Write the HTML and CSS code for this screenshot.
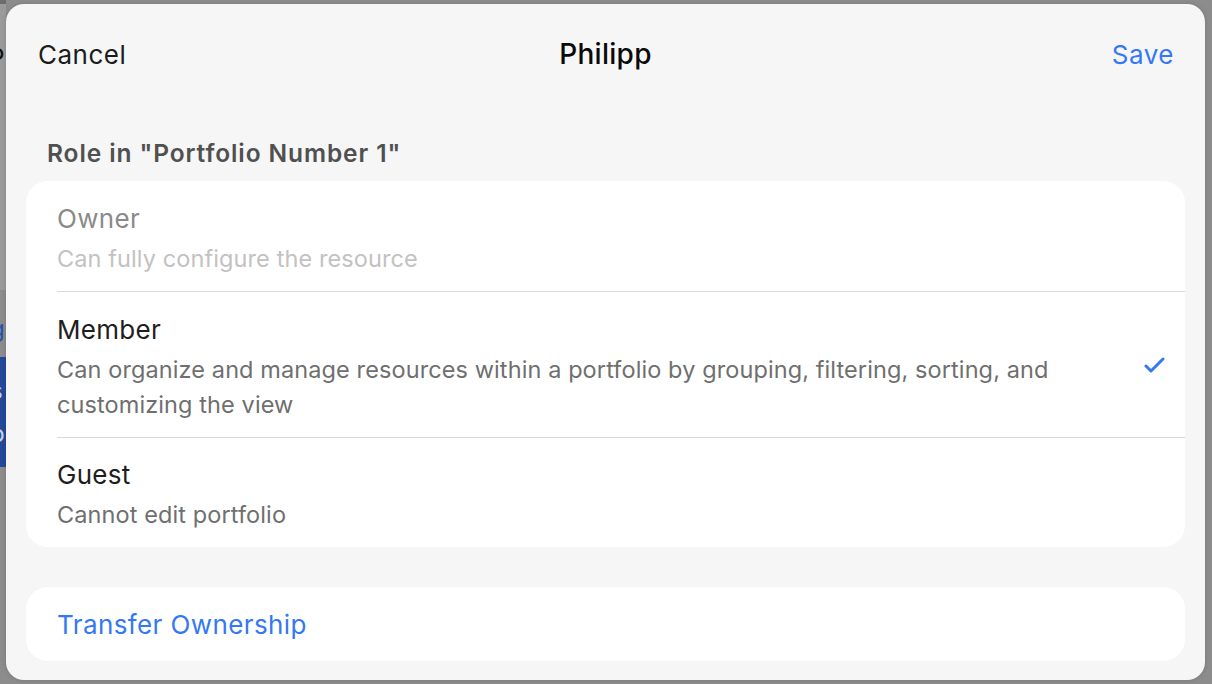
FILE: index.html
```html
<!DOCTYPE html>
<html lang="en">
<head>
  <meta charset="UTF-8">
  <meta name="viewport" content="width=device-width, initial-scale=1.0">
  <title>Philipp</title>
  <link rel="stylesheet" href="styles.css">
</head>
<body>
  <div class="page">
    <div class="page-top"></div>
    <div class="page-head">
      <span class="page-title">P</span>
    </div>
    <div class="page-body">
      <span class="page-link">g</span>
      <div class="page-banner">
        <span>s</span>
        <span>b</span>
      </div>
      <span class="page-link">i</span>
    </div>
  </div>

  <div class="sheet">
    <div class="sheet-header">
      <button class="nav-btn">Cancel</button>
      <h1 class="sheet-title">Philipp</h1>
      <button class="nav-btn primary">Save</button>
    </div>

    <div class="section-label">Role in "Portfolio Number 1"</div>

    <div class="card">
      <div class="role disabled">
        <div class="role-text">
          <div class="role-name">Owner</div>
          <div class="role-desc">Can fully configure the resource</div>
        </div>
      </div>
      <div class="role">
        <div class="role-text">
          <div class="role-name">Member</div>
          <div class="role-desc">Can organize and manage resources within a portfolio by grouping, filtering, sorting, and customizing the view</div>
        </div>
        <svg class="check" width="22" height="17" viewBox="0 0 22 17">
          <path d="M3 10 L8 15 L20 3" fill="none" stroke="#3478f6" stroke-width="3" stroke-linecap="round" stroke-linejoin="round"/>
        </svg>
      </div>
      <div class="role">
        <div class="role-text">
          <div class="role-name">Guest</div>
          <div class="role-desc">Cannot edit portfolio</div>
        </div>
      </div>
    </div>

    <div class="card action">
      <button class="link-btn">Transfer Ownership</button>
    </div>
  </div>
</body>
</html>
```

FILE: styles.css
```css
body {
  margin: 0;
  font-family: Inter, "Noto Sans", sans-serif;
  background: #8c8c8c;
  height: 684px;
  overflow: hidden;
}

/* page behind the sheet (dimmed), only a thin strip shows */
.page {
  display: flex;
  flex-direction: column;
  width: 6px;
  overflow: hidden;
}

.page-top {
  height: 4px;
  background: #6d6d6d;
}

.page-head {
  height: 286px;
  background: #9a9a9a;
  padding-top: 38px;
  box-sizing: border-box;
  margin-left: -12px;
}

.page-title {
  font-size: 26px;
  color: #111;
}

.page-body {
  display: flex;
  flex-direction: column;
  align-items: flex-start;
  padding-top: 24px;
  gap: 14px;
  margin-left: -10px;
}

.page-link {
  font-size: 24px;
  color: #2a54a8;
}

.page-banner {
  width: 300px;
  height: 110px;
  background: #24489a;
  color: #c8d2ea;
  font-size: 24px;
  display: flex;
  flex-direction: column;
  justify-content: center;
  gap: 14px;
}

/* sheet */
.sheet {
  position: absolute;
  left: 6px;
  top: 4px;
  width: 1199px;
  height: 676px;
  background: #f6f6f6;
  border-radius: 18px;
  box-shadow: 0 0 4px rgba(0, 0, 0, 0.15);
  padding: 0 20px;
  box-sizing: border-box;
}

.sheet-header {
  height: 100px;
  display: grid;
  grid-template-columns: 1fr auto 1fr;
  align-items: center;
  padding: 0 12px;
}

.nav-btn {
  font-family: inherit;
  font-size: 26px;
  background: none;
  border: none;
  padding: 0;
  color: #1c1c1c;
  letter-spacing: 0.5px;
  justify-self: start;
}

.nav-btn.primary {
  color: #3478f6;
  justify-self: end;
  margin-right: -1px;
}

.sheet-title {
  margin: 0;
  font-size: 28px;
  font-weight: 500;
  letter-spacing: 0.3px;
  color: #0a0a0a;
}

.section-label {
  margin: 34px 0 13px;
  padding-left: 21px;
  font-size: 24.5px;
  line-height: 30px;
  font-weight: 600;
  letter-spacing: 0.9px;
  color: #505050;
}

.card {
  background: #fff;
  border-radius: 22px;
  overflow: hidden;
}

.role {
  display: flex;
  align-items: center;
  margin-left: 31px;
  padding: 21px 20px 15px 0;
  border-bottom: 1px solid #d9d9d9;
}

.role:last-child {
  border-bottom: none;
  padding-top: 20px;
}

.role-text {
  flex: 1;
  padding-right: 60px;
}

.role-name {
  font-size: 26px;
  line-height: 34px;
  letter-spacing: 0.3px;
  color: #1e1e1e;
}

.role-desc {
  margin-top: 5px;
  font-size: 23.5px;
  line-height: 35px;
  letter-spacing: 0.1px;
  color: #6f6f6f;
}

.role.disabled .role-name {
  color: #8a8a8a;
}

.role.disabled .role-desc {
  color: #c2c2c2;
}

.check {
  flex-shrink: 0;
  margin-top: -6px;
}

.card.action {
  margin-top: 40px;
  height: 74px;
  display: flex;
  align-items: center;
  padding-left: 31px;
}

.link-btn {
  font-family: inherit;
  font-size: 26px;
  letter-spacing: 0.4px;
  background: none;
  border: none;
  padding: 0;
  color: #3478f6;
}
```
